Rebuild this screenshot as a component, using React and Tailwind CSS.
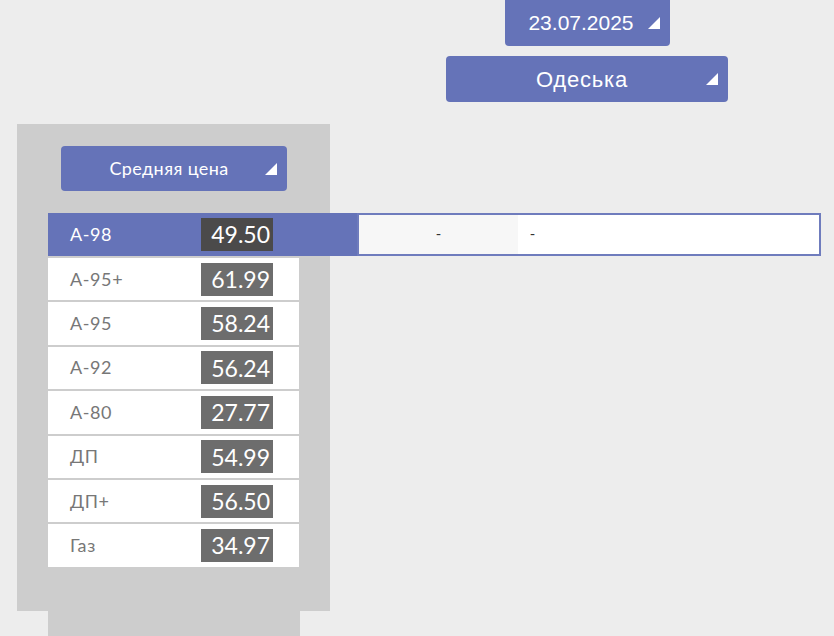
const BLUE = 'bg-[#6573b8]';

const FUELS = [
  { name: 'A-98', price: '49.50' },
  { name: 'A-95+', price: '61.99' },
  { name: 'A-95', price: '58.24' },
  { name: 'A-92', price: '56.24' },
  { name: 'A-80', price: '27.77' },
  { name: 'ДП', price: '54.99' },
  { name: 'ДП+', price: '56.50' },
  { name: 'Газ', price: '34.97' },
];

const Tri = () => (
  <svg width="12" height="12" viewBox="0 0 12 12" className="shrink-0">
    <polygon points="12,0 12,12 0,12" fill="#ffffff" />
  </svg>
);

const Dropdown = ({ label, className, textClass }) => (
  <div className={`${BLUE} flex items-center text-white ${className}`}>
    <span className={`flex-1 text-center ${textClass}`}>{label}</span>
    <span className="pr-[10px]"><Tri /></span>
  </div>
);

const FuelRow = ({ fuel, selected }) => {
  if (selected) {
    return (
      <div className="flex h-[43px] shrink-0">
        <div className={`${BLUE} w-[309px] flex items-center shrink-0`}>
          <span className="w-[153px] pl-[22px] text-[18px] tracking-[0.6px] text-white">{fuel.name}</span>
          <span className="w-[72px] h-[33px] bg-[#4b4a4a] text-white text-[23px] flex items-center justify-end pr-[3px]">{fuel.price}</span>
        </div>
        <div className="w-[464px] border-2 border-[#6f7cbd] flex shrink-0 bg-white font-['Liberation_Sans',sans-serif] text-[15px] text-[#333]">
          <div className="w-[159px] bg-[#f7f7f7] flex items-center justify-center">-</div>
          <div className="flex-1 flex items-center pl-[12px]">-</div>
        </div>
      </div>
    );
  }
  return (
    <div className="flex items-center h-[42.4px] w-[251px] bg-white shrink-0">
      <span className="w-[153px] pl-[22px] text-[18px] tracking-[0.6px] text-[#777777]">{fuel.name}</span>
      <span className="w-[72px] h-[33px] bg-[#6d6d6d] text-white text-[23px] flex items-center justify-end pr-[3px]">{fuel.price}</span>
    </div>
  );
};

export default function App() {
  return (
    <div className="w-[834px] h-[636px] bg-[#ededed] overflow-hidden font-['Lato','Liberation_Sans',sans-serif]">
      <div className="ml-[446px] w-[282px] flex flex-col items-center">
        <Dropdown
          label="23.07.2025"
          className="w-[165px] h-[46px] rounded-b-[4px] pl-[10px]"
          textClass="text-[21px] font-['Liberation_Sans',sans-serif]"
        />
        <Dropdown
          label="Одеська"
          className="mt-[10px] w-[282px] h-[46px] rounded-[4px] pl-[12px]"
          textClass="text-[22px] tracking-[0.8px] font-['Liberation_Sans',sans-serif]"
        />
      </div>

      <div className="mt-[22px] ml-[17px] w-[313px] h-[487px] bg-[#cdcdcd] pt-[22px]">
        <Dropdown
          label="Средняя цена"
          className="ml-[44px] w-[226px] h-[45px] rounded-[4px] pl-[12px]"
          textClass="text-[18px] tracking-[0.4px]"
        />
        <div className="mt-[22px] ml-[31px] flex flex-col gap-[2px]">
          {FUELS.map((f, i) => (
            <FuelRow key={f.name} fuel={f} selected={i === 0} />
          ))}
        </div>
      </div>
      <div className="ml-[48px] w-[252px] h-[40px] bg-[#cdcdcd]" />
    </div>
  );
}
